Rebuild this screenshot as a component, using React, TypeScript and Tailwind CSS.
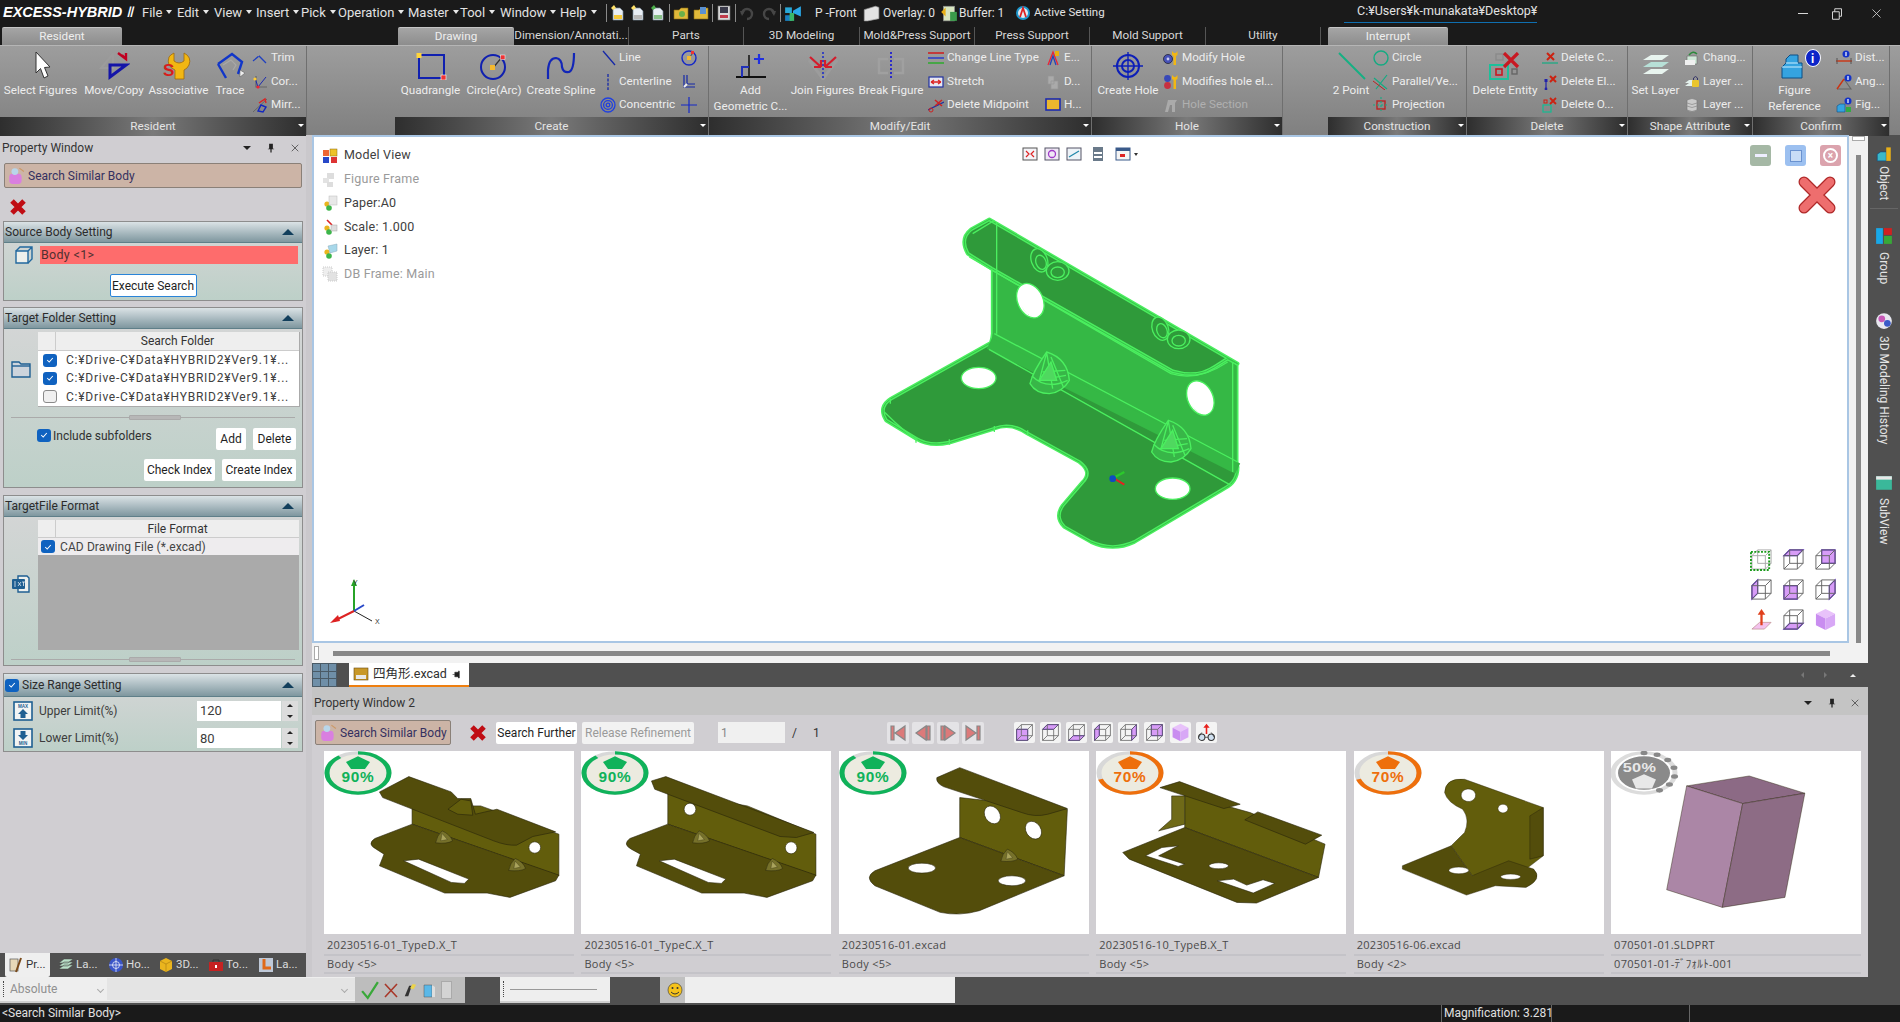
import React from "react";
import { X } from "lucide-react";

type Kids = { children?: React.ReactNode };
const S = ({ children, c = "w-[16px] h-[16px]" }: Kids & { c?: string }) => (
  <svg viewBox="0 0 16 16" className={`${c} shrink-0`}>{children}</svg>
);
const B = ({ children }: Kids) => (
  <svg viewBox="0 0 32 28" className="w-[32px] h-[28px] shrink-0">{children}</svg>
);

/* ---------- ribbon big icons ---------- */
const big = {
  select: <B><path d="M11 0 L11 21 L15.5 16.5 L19 26 L23 24 L19.5 15.5 L25 15 Z" fill="#fff" stroke="#333" strokeWidth="1" /></B>,
  move: <B><path d="M3 16 L15 2 L15 16 Z" fill="none" stroke="#9c9c9c" strokeWidth="2" /><path d="M12 25 L12 13 L28 13 Z" fill="none" stroke="#1414a8" strokeWidth="3" /><path d="M20 1 L28 7 L28 1 M28 7 L24 3" stroke="#c00020" strokeWidth="2.4" fill="none" /></B>,
  assoc: <B><path d="M11 1 L11 9 Q16 13 21 9 L21 1 Q29 5 26 13 Q24 17 21 18 L21 27 L12 27 L12 18 Q3 14 6 5 Q7 3 11 1Z" fill="#f2b713" stroke="#a06a0b" strokeWidth=".8" /><text x="0" y="24" fontSize="17" fontWeight="700" fill="#d91c1c" fontFamily="Liberation Sans">S</text></B>,
  trace: <B><path d="M4 12 L18 2 L28 10 L24 22 M12 26 L4 12" fill="none" stroke="#1136c9" strokeWidth="2.4" /><path d="M9 13 L17 8 L22 13 L19 18" fill="none" stroke="#a8a8a8" strokeWidth="1.2" /><path d="M26 18 L31 21 L26 25Z" fill="#eee" stroke="#555" strokeWidth=".5" /></B>,
  quad: <B><rect x="4" y="3" width="25" height="23" fill="none" stroke="#1020b0" strokeWidth="2" /><rect x="1.5" y="1" width="5" height="5" fill="#ffd43a" /><rect x="26" y="23" width="5" height="5" fill="#ee3333" stroke="#fff" strokeWidth=".6" /></B>,
  circle: <B><ellipse cx="15" cy="15" rx="12" ry="12" fill="none" stroke="#1020b0" strokeWidth="2" /><path d="M15 16 L24 5" stroke="#333" strokeWidth="1.2" /><rect x="12" y="13" width="5" height="5" fill="#f5b92e" /><rect x="22.5" y="3" width="4.5" height="4.5" fill="#ee3333" stroke="#fff" strokeWidth=".5" /></B>,
  spline: <B><path d="M3 27 L3 18 Q4 6 11 6 Q17 7 17 15 Q18 21 24 20 Q29 18 29 1" fill="none" stroke="#1226b8" strokeWidth="2.2" /></B>,
  add: <B><path d="M1 25 H31" stroke="#111" strokeWidth="2" /><path d="M14 25 V3" stroke="#111" strokeWidth="1.5" /><path d="M7 25 V15 H14" fill="none" stroke="#2030b8" strokeWidth="2" /><path d="M19 7 H29 M24 2 V12" stroke="#2030e0" strokeWidth="2.2" /></B>,
  join: <B><path d="M2 8 L16 27 L30 8" fill="none" stroke="#9c9c9c" strokeWidth="3" /><path d="M16 0 V28" stroke="#2030c8" strokeWidth="1.6" strokeDasharray="2 2" /><path d="M3 5 L14 15 M14 15 V8 M14 15 L7 15 M29 5 L18 15 M18 15 V8 M18 15 L25 15" stroke="#d41c2c" strokeWidth="2.2" fill="none" /></B>,
  brk: <B><path d="M13 7 H4 V21 H13 M19 7 H28 V21 H19" fill="none" stroke="#a0a0a0" strokeWidth="2.4" /><path d="M16 0 V28" stroke="#2020d0" strokeWidth="1.8" strokeDasharray="2 2" /></B>,
  hole: <B><circle cx="16" cy="14" r="11" fill="none" stroke="#0d1fb8" strokeWidth="2" /><circle cx="16" cy="14" r="6" fill="none" stroke="#0d1fb8" strokeWidth="2" /><path d="M16 0 V28 M1 14 H31" stroke="#0d1fb8" strokeWidth="1.4" /></B>,
  twoPt: <B><path d="M4 1 L30 27" stroke="#16b083" strokeWidth="2" /></B>,
  delEnt: <B><rect x="7" y="2" width="7" height="6" fill="none" stroke="#8a8a8a" strokeWidth="1.4" /><rect x="1" y="13" width="18" height="14" fill="none" stroke="#1cc09a" strokeWidth="2" /><rect x="7" y="17" width="6" height="6" fill="none" stroke="#c81822" strokeWidth="1.6" /><path d="M15 1 L29 15 M29 1 L15 15" stroke="#c81822" strokeWidth="3.2" /><rect x="23" y="17" width="5" height="5" fill="none" stroke="#666" strokeWidth="1.4" /></B>,
  layer: <B><path d="M3 8 L11 3 H29 L22 8Z" fill="#e8f4ef" /><path d="M3 15 L11 10 H29 L22 15Z" fill="#b7e0d7" /><path d="M3 22 L11 17 H29 L22 22Z" fill="#e8f4ef" /></B>,
  figRef: <B><path d="M3 26 V15 L7 11 V7 L11 3 H19 V11 L23 11 V26Z" fill="#35a3e0" stroke="#0d4e85" strokeWidth="1" /><path d="M7 11 H19 M3 15 H23" stroke="#cceeff" strokeWidth="1" /></B>,
};

/* ---------- ribbon small icons ---------- */
const sm = {
  trim: <S><path d="M1 11 L7 6 L14 13" fill="none" stroke="#2040c0" strokeWidth="1.3" /><path d="M7 6 L3 2" stroke="#999" strokeWidth="1.3" /></S>,
  cor: <S><path d="M4 2 V13 H15" fill="none" stroke="#666" strokeWidth="1.2" /><path d="M3 4 L6 13 L14 3" fill="none" stroke="#1c2bb0" strokeWidth="1" /><circle cx="6" cy="13" r="1.6" fill="#e23" /><circle cx="3" cy="5" r="1.6" fill="#fc3" /></S>,
  mirr: <S><path d="M1 15 L15 2" stroke="#666" strokeWidth="1" /><path d="M6 14 L9 8 L14 10 L11 15Z" fill="none" stroke="#1226c0" strokeWidth="1.4" /><path d="M7 6 L13 2 L14 6" fill="none" stroke="#d22" strokeWidth="1.4" /></S>,
  line: <S><path d="M3 1 L15 15" stroke="#1528a8" strokeWidth="1.3" /></S>,
  center: <S><path d="M8 0 V16" stroke="#1528a8" strokeWidth="1.3" strokeDasharray="3 1.4" /></S>,
  conc: <S><circle cx="8" cy="8" r="7" fill="none" stroke="#2040e0" strokeWidth="1.3" /><circle cx="8" cy="8" r="4.4" fill="none" stroke="#2040e0" strokeWidth="1.3" /><circle cx="8" cy="8" r="1.8" fill="none" stroke="#2040e0" strokeWidth="1.3" /></S>,
  ring: <S><circle cx="8" cy="8" r="7" fill="none" stroke="#1528c8" strokeWidth="1.4" /><path d="M8 8 L12 3" stroke="#444" /><rect x="6" y="6" width="4" height="4" fill="#f5b92e" /><rect x="10" y="1" width="3" height="3" fill="#e33" /></S>,
  elbow: <S><path d="M3 1 V13 H14 M6 1 V10 H14" fill="none" stroke="#1528a8" strokeWidth="1.2" /><path d="M3 13 L6 10" stroke="#eee" strokeWidth="2" /></S>,
  plus: <S><path d="M0 8 H16 M8 0 V16" stroke="#1528c8" strokeWidth="1.2" /></S>,
  lineType: <S><path d="M0 3 H16" stroke="#c22" strokeWidth="1.6" /><path d="M0 8 H16" stroke="#3040c8" strokeWidth="1.6" /><path d="M0 13 H16" stroke="#3a3" strokeWidth="1.6" /></S>,
  stretch: <S><rect x="1" y="3" width="14" height="10" fill="#e8e8f0" stroke="#2030a0" strokeWidth="1.2" /><path d="M3 8 H13 M3 8 L6 6 M3 8 L6 10 M13 8 L10 6 M13 8 L10 10" stroke="#d22" strokeWidth="1.3" fill="none" /></S>,
  delMid: <S><path d="M0 13 L16 5" stroke="#2030a0" strokeWidth="1.2" /><circle cx="3" cy="13" r="2" fill="none" stroke="#c22" /><path d="M7 3 L14 9 M14 3 L7 9" stroke="#c22" strokeWidth="1.6" /></S>,
  eKey: <S><path d="M3 15 L8 2 L13 15" fill="none" stroke="#e23" strokeWidth="1.3" /><path d="M5 15 L8 6 L11 15" fill="none" stroke="#24b" strokeWidth="1.3" /><path d="M10 1 V6 H14 V1" fill="#e8b010" /></S>,
  dDoc: <S><path d="M3 2 H9 V10 H3Z M6 7 H13 V15 H6Z" fill="#aaa" stroke="#999" strokeWidth=".7" /></S>,
  hatch: <S><rect x="1" y="2" width="14" height="11" fill="#eab72e" stroke="#1c2bb0" strokeWidth="1.6" /></S>,
  modHole: <S><circle cx="5" cy="9" r="4.5" fill="#4752b8" stroke="#223" strokeWidth=".8" /><circle cx="5" cy="9" r="1.4" fill="#c9ccf2" /><path d="M9 1 V5 L10.5 6 V15 H13 V6 L14.5 5 V1 L12.8 3 L11 3Z" fill="#f2b713" /></S>,
  modHole2: <S><circle cx="4.5" cy="4.5" r="3.4" fill="#3848b8" /><circle cx="4.5" cy="11.5" r="3.4" fill="#c83040" /><path d="M9 1 V5 L10.5 6 V15 H13 V6 L14.5 5 V1 L12.8 3 L11 3Z" fill="#f2b713" /></S>,
  holeSec: <S><path d="M2 15 L5 3 H14 L12 6 V15 H9 V8 H7 L5 15Z" fill="#aaa" /></S>,
  cCircle: <S><ellipse cx="8" cy="8" rx="7" ry="7" fill="none" stroke="#14ab82" strokeWidth="1.4" /></S>,
  par: <S><path d="M1 4 L14 15 M14 1 L3 15" stroke="#14ab82" strokeWidth="1.2" /><path d="M0 7 L12 16" stroke="#b22" strokeWidth="1" /></S>,
  proj: <S><rect x="4" y="4" width="8" height="8" fill="none" stroke="#b22" strokeWidth="1.4" /><path d="M8 0 V16 M0 8 H16" stroke="#14ab82" strokeWidth="1.1" strokeDasharray="2 2" /></S>,
  delC: <S><path d="M0 13 H16" stroke="#14ab82" strokeWidth="1.2" /><path d="M5 3 L12 10 M12 3 L5 10" stroke="#c21" strokeWidth="2" /></S>,
  delE: <S><path d="M4 5 V15" stroke="#22a" strokeWidth="1.2" /><circle cx="4" cy="15" r="1.4" fill="#22a" /><rect x="2.5" y="5" width="3" height="3" fill="#22a" /><path d="M8 2 L14 8 M14 2 L8 8" stroke="#c21" strokeWidth="2" /></S>,
  delO: <S><rect x="1" y="8" width="8" height="7" fill="none" stroke="#14bb92" strokeWidth="1.2" /><rect x="2" y="3" width="3" height="3" fill="none" stroke="#c21" /><path d="M8 1 L14 7 M14 1 L8 7" stroke="#c21" strokeWidth="1.8" /><rect x="11" y="10" width="3" height="3" fill="none" stroke="#888" /></S>,
  chg: <S><path d="M3 6 H13 V14 H3Z" fill="#cfe8d8" stroke="#666" strokeWidth=".6" /><path d="M1 10 H11 V15 H1Z" fill="#f0f0f0" /><path d="M5 5 Q9 0 13 4" fill="none" stroke="#2a8a3a" strokeWidth="1.5" /></S>,
  lay: <S><path d="M1 12 L5 9 H13 L9 12Z M1 9 L5 6 H13 L9 9Z" fill="#e3f0ec" /><rect x="8" y="6" width="7" height="7" rx="1" fill="#eac52c" /><path d="M9.5 6 V4 Q11.5 1 13.5 4 V6" fill="none" stroke="#336" strokeWidth="1" /></S>,
  lay2: <S><path d="M3 3 Q8 0 13 3 V13 Q8 16 3 13Z" fill="#cbcbcb" stroke="#777" strokeWidth=".6" /><path d="M3 6 Q8 9 13 6 M3 9 Q8 12 13 9" fill="none" stroke="#888" strokeWidth=".7" /></S>,
  dist: <S><path d="M0 11 H16" stroke="#c31" strokeWidth="1.4" /><path d="M1 8 V14 M15 8 V14" stroke="#555" /><circle cx="10" cy="4" r="3.5" fill="#1433c8" /><rect x="9.4" y="2" width="1.2" height="4" fill="#fff" /></S>,
  ang: <S><path d="M1 15 H15 L8 5" fill="none" stroke="#666" strokeWidth="1.2" /><path d="M1 15 L8 5" stroke="#c31" strokeWidth="1.4" /><circle cx="12" cy="4" r="3.5" fill="#1433c8" /><rect x="11.4" y="2" width="1.2" height="4" fill="#fff" /></S>,
  fig: <S><path d="M1 15 V9 L4 7 H9 V15Z" fill="#35a3e0" stroke="#0d4e85" strokeWidth=".6" /><path d="M10 10 H15 V15 H10Z" fill="#3a4" /><circle cx="12" cy="4" r="3.5" fill="#1433c8" /><rect x="11.4" y="2" width="1.2" height="4" fill="#fff" /></S>,
};

/* ---------- ribbon structure ---------- */
const Big = ({ w, ml = 0, icon, lines }: { w: number; ml?: number; icon: React.ReactNode; lines: string[] }) => (
  <div className="flex flex-col items-center shrink-0 pt-[6px]" style={{ width: w, marginLeft: ml }}>
    {icon}
    <div className="mt-[2px] text-center leading-[16px] whitespace-nowrap">
      {lines.map((l) => <div key={l}>{l}</div>)}
    </div>
  </div>
);
const Col = ({ w, ml = 0, items }: { w: number; ml?: number; items: [React.ReactNode, string, boolean?][] }) => (
  <div className="flex flex-col shrink-0" style={{ width: w, marginLeft: ml }}>
    {items.map(([ic, t, dis], i) => (
      <div key={i} className={`flex items-center gap-[3px] h-[23.7px] whitespace-nowrap ${dis ? "text-[#b0b0b0]" : ""}`}>
        {ic}<span>{t}</span>
      </div>
    ))}
  </div>
);
const Group = ({ w, pl = 4, label, children }: Kids & { w: number; pl?: number; label: string }) => (
  <div className="flex flex-col shrink-0 h-[90px] border-r border-[#6f6f6f]" style={{ width: w }}>
    <div className="flex h-[71px] overflow-hidden" style={{ paddingLeft: pl }}>{children}</div>
    <div className="relative h-[19px] flex items-center justify-center text-[#e4e4e4] bg-gradient-to-r from-[#2e2e2e] via-[#7a7a7a] to-[#2e2e2e]">
      {label}
      <span className="absolute right-[2px] top-[7px] border-x-[3px] border-t-[3px] border-x-transparent border-t-white" />
    </div>
  </div>
);

const Ribbon = () => (
  <div className="flex h-[90px] text-[11.7px] text-[#ededed] bg-gradient-to-b from-[#9d9d9d] to-[#808080] border-t border-[#b5b5b5]">
    <Group w={307} label="Resident" pl={4}>
      <Big w={73} icon={big.select} lines={["Select Figures"]} />
      <Big w={62} ml={6} icon={big.move} lines={["Move/Copy"]} />
      <Big w={59} ml={4} icon={big.assoc} lines={["Associative"]} />
      <Big w={30} ml={7} icon={big.trace} lines={["Trace"]} />
      <Col w={55} ml={7} items={[[sm.trim, "Trim"], [sm.cor, "Cor..."], [sm.mirr, "Mirr..."]]} />
    </Group>
    <div className="w-[88px] shrink-0" />
    <Group w={314} label="Create" pl={5}>
      <Big w={61} icon={big.quad} lines={["Quadrangle"]} />
      <Big w={56} ml={5} icon={big.circle} lines={["Circle(Arc)"]} />
      <Big w={70} ml={4} icon={big.spline} lines={["Create Spline"]} />
      <Col w={81} ml={4} items={[[sm.line, "Line"], [sm.center, "Centerline"], [sm.conc, "Concentric"]]} />
      <Col w={24} items={[[sm.ring, ""], [sm.elbow, ""], [sm.plus, ""]]} />
    </Group>
    <Group w={383} label="Modify/Edit" pl={5}>
      <Big w={73} icon={big.add} lines={["Add", "Geometric C..."]} />
      <Big w={61} ml={5} icon={big.join} lines={["Join Figures"]} />
      <Big w={64} ml={6} icon={big.brk} lines={["Break Figure"]} />
      <Col w={117} ml={5} items={[[sm.lineType, "Change Line Type"], [sm.stretch, "Stretch"], [sm.delMid, "Delete Midpoint"]]} />
      <Col w={40} items={[[sm.eKey, "E..."], [sm.dDoc, "D..."], [sm.hatch, "H..."]]} />
    </Group>
    <Group w={191} label="Hole" pl={4}>
      <Big w={64} icon={big.hole} lines={["Create Hole"]} />
      <Col w={118} ml={3} items={[[sm.modHole, "Modify Hole"], [sm.modHole2, "Modifies hole el..."], [sm.holeSec, "Hole Section", true]]} />
    </Group>
    <div className="w-[45px] shrink-0" />
    <Group w={139} label="Construction" pl={5}>
      <Big w={36} icon={big.twoPt} lines={["2 Point"]} />
      <Col w={90} ml={4} items={[[sm.cCircle, "Circle"], [sm.par, "Parallel/Ve..."], [sm.proj, "Projection"]]} />
    </Group>
    <Group w={161} label="Delete" pl={4}>
      <Big w={68} icon={big.delEnt} lines={["Delete Entity"]} />
      <Col w={84} ml={3} items={[[sm.delC, "Delete C..."], [sm.delE, "Delete El..."], [sm.delO, "Delete O..."]]} />
    </Group>
    <Group w={125} label="Shape Attribute" pl={4}>
      <Big w={47} icon={big.layer} lines={["Set Layer"]} />
      <Col w={62} ml={5} items={[[sm.chg, "Chang..."], [sm.lay, "Layer ..."], [sm.lay2, "Layer ..."]]} />
    </Group>
    <Group w={137} label="Confirm" pl={15}>
      <Big w={53} icon={
        <div className="relative w-[32px] h-[28px]">
          {big.figRef}
          <span className="absolute -top-[3px] -right-[10px] w-[16px] h-[18px] rounded-[50%] bg-[#0d24c8] text-white text-[12px] font-bold leading-[18px] text-center border border-white">i</span>
        </div>
      } lines={["Figure", "Reference"]} />
      <Col w={52} ml={15} items={[[sm.dist, "Dist..."], [sm.ang, "Ang..."], [sm.fig, "Fig..."]]} />
    </Group>
  </div>
);

/* ---------- title bar ---------- */
const Caret = () => <span className="inline-block ml-[4px] mb-[3px] border-x-[3.5px] border-t-[4px] border-x-transparent border-t-[#e8e8e8]" />;
const Sep = () => <span className="w-px h-[18px] bg-[#8a8a8a] mx-[3px] shrink-0" />;
const Doc = ({ tint = "#f3c93b", star = "#ffe26a" }: { tint?: string; star?: string }) => (
  <S><path d="M3 3 H10 L13 6 V15 H3Z" fill="#e8eef5" stroke="#7a8a9a" strokeWidth=".7" /><rect x="4" y="10" width="8" height="4" fill={tint} /><path d="M4 0 L6 3 L3 5 L1 3Z" fill={star} /></S>
);
const TitleBar = () => (
  <div className="flex items-center h-[27px] pb-[2px] bg-[#1a1a1a] text-[13px] text-[#e2e2e2] relative">
    <div className="ml-[3px] w-[139px] shrink-0 whitespace-nowrap text-[14.5px] italic font-bold text-white font-['Liberation_Sans',sans-serif]">EXCESS-HYBRID<span className="font-['Liberation_Serif',serif] font-normal"> Ⅱ</span></div>
    <div className="flex w-[461px] shrink-0">
      {[["File", 35], ["Edit", 37], ["View", 42], ["Insert", 45], ["Pick", 37], ["Operation", 70], ["Master", 52], ["Tool", 40], ["Window", 60], ["Help", 41]].map(([m, w]) => (
        <div key={m as string} className="whitespace-nowrap" style={{ width: w as number }}>{m}<Caret /></div>
      ))}
    </div>
    <Sep />
    <div className="flex items-center gap-[4px]">
      <Doc /><Doc tint="#b9b9b9" /><Doc tint="#88c088" star="#4cb04c" />
    </div>
    <Sep />
    <div className="flex items-center gap-[4px]">
      <S><path d="M1 5 H6 L8 3 H15 V14 H1Z" fill="#e0b93a" stroke="#8a6a10" strokeWidth=".6" /><circle cx="9" cy="9" r="3" fill="#6ab04a" /></S>
      <S><path d="M1 5 H6 L8 3 H15 V14 H1Z" fill="#e0b93a" stroke="#8a6a10" strokeWidth=".6" /><rect x="7" y="2" width="6" height="7" fill="#5a90d0" /></S>
    </div>
    <Sep />
    <S><rect x="2" y="1" width="12" height="14" fill="#d8d8d8" stroke="#777" strokeWidth=".6" /><rect x="4" y="2" width="8" height="6" fill="#3a3a4a" /><rect x="4" y="10" width="8" height="3" fill="#c03a4a" /></S>
    <Sep />
    <div className="flex items-center gap-[6px] opacity-40">
      <S><path d="M3 9 A5 5 0 1 1 8 14" fill="none" stroke="#888" strokeWidth="2.4" /><path d="M1 6 L6 6 L3 11Z" fill="#888" /></S>
      <S><path d="M13 9 A5 5 0 1 0 8 14" fill="none" stroke="#888" strokeWidth="2.4" /><path d="M15 6 L10 6 L13 11Z" fill="#888" /></S>
    </div>
    <Sep />
    <S c="w-[18px] h-[18px]"><rect x="1" y="3" width="6" height="5" fill="#28a8d8" /><rect x="1" y="10" width="6" height="5" fill="#1880c0" /><path d="M8 6 L15 2 V11 L8 8Z" fill="#2aa8e8" /><rect x="5" y="8" width="4" height="7" fill="#3ab86a" /></S>
    <span className="ml-[13px] w-[40px] whitespace-nowrap text-[12px]">P -Front</span>
    <S c="w-[18px] h-[18px] ml-[7px]"><path d="M2 5 L12 2 L15 3 V13 L5 15 H2Z" fill="#e2e2e2" stroke="#999" strokeWidth=".6" /></S>
    <span className="ml-[3px] w-[52px] whitespace-nowrap text-[12px]">Overlay: 0</span>
    <S c="w-[18px] h-[18px] ml-[5px]"><rect x="3" y="2" width="10" height="13" fill="#d8e6c0" stroke="#888" strokeWidth=".6" /><path d="M1 7 L5 3 V11Z" fill="#e8b018" /><rect x="9" y="7" width="6" height="8" fill="#3a9a4a" /></S>
    <span className="ml-[1px] w-[45px] whitespace-nowrap text-[12px]">Buffer: 1</span>
    <S c="w-[16px] h-[16px] ml-[11px]"><circle cx="8" cy="8" r="7" fill="#1c96cc" /><circle cx="8" cy="8" r="5" fill="#e0e8f0" /><path d="M5 12 L8 3 L11 12" fill="none" stroke="#d22" strokeWidth="1.8" /></S>
    <span className="ml-[3px] whitespace-nowrap text-[11.5px]">Active Setting</span>
    <div className="absolute left-[1344px] top-[1px] w-[193px] h-[22px] border-b border-[#0f6fb0] pl-[13px] leading-[20px] whitespace-nowrap text-[12.5px]">C:¥Users¥k-munakata¥Desktop¥</div>
    <div className="absolute right-0 top-0 h-[27px] w-[110px] flex items-center text-[#d8d8d8]">
      <span className="ml-[8px] w-[10px] h-px bg-[#d8d8d8]" />
      <S c="w-[12px] h-[12px] ml-[23px]"><path d="M2 5 H11 V15 H2Z M5 5 V1 H14 V11 H11" fill="none" stroke="#d8d8d8" strokeWidth="1.3" /></S>
      <X size={15} strokeWidth={1.3} className="ml-[26px]" />
    </div>
  </div>
);

const TabsRow = () => {
  const tabs: [string, number][] = [["Dimension/Annotati...", 115], ["Parts", 115], ["3D Modeling", 116], ["Mold&Press Support", 115], ["Press Support", 115], ["Mold Support", 116], ["Utility", 115]];
  const Active = ({ t, w, ml }: { t: string; w: number; ml: number }) => (
    <div className="flex items-center justify-center h-[18px] rounded-t-[2px] text-[#eee] bg-gradient-to-b from-[#a5a5a5] to-[#8d8d8d] border-t border-[#c5c5c5] shrink-0" style={{ width: w, marginLeft: ml }}>{t}</div>
  );
  return (
    <div className="flex h-[18px] bg-[#1a1a1a] text-[11.7px] text-[#d8d8d8]">
      <Active t="Resident" w={120} ml={2} />
      <Active t="Drawing" w={116} ml={276} />
      {tabs.map(([t, w]) => (
        <div key={t} className="flex items-center justify-center h-[18px] border-r border-[#555] whitespace-nowrap shrink-0" style={{ width: w }}>{t}</div>
      ))}
      <Active t="Interrupt" w={120} ml={7} />
    </div>
  );
};

/* ---------- left panel ---------- */
const Tri = () => <span className="ml-auto mr-[7px] border-x-[6px] border-b-[6px] border-x-transparent border-b-[#123f5c]" />;
const Check = ({ on = true }: { on?: boolean }) => on ? (
  <span className="flex items-center justify-center w-[14px] h-[13px] rounded-[3px] bg-[#0f62c0] shrink-0">
    <svg viewBox="0 0 10 10" className="w-[8px] h-[8px]"><path d="M1.5 5 L4 7.5 L8.5 2.5" fill="none" stroke="#fff" strokeWidth="1.3" /></svg>
  </span>
) : <span className="block w-[14px] h-[13px] rounded-[3px] bg-[#f0f0f0] border border-[#8a8a8a] shrink-0" />;
const Head = ({ children }: Kids) => (
  <div className="flex items-center h-[21px] px-[1px] bg-gradient-to-b from-[#dbe3e6] to-[#7f979f] border-b border-[#5f7f89] text-[#2b2b2b] text-[12px]">
    {children}<Tri />
  </div>
);
const Sec = ({ h, mt, children }: Kids & { h: number; mt: number }) => (
  <div className="mx-[3px] border border-[#8d8d8d] bg-gradient-to-b from-[#d6d6d7] to-[#bdd0c8] shrink-0" style={{ height: h, marginTop: mt }}>{children}</div>
);
const Btn = ({ children, c }: Kids & { c: string }) => (
  <div className={`flex items-center justify-center bg-white rounded-[2px] text-[#1f1f1f] whitespace-nowrap ${c}`}>{children}</div>
);
const Grip = () => (
  <div className="relative h-px bg-[#aaa] mx-[7px]">
    <span className="absolute left-[118px] -top-[2px] w-[52px] h-[5px] bg-[#b7b7b7] border border-[#aaa] rounded-[1px]" />
  </div>
);
const PathRow = ({ on }: { on: boolean }) => (
  <div className="flex items-center h-[18.3px] bg-white">
    <span className="block w-[23px] pl-[5px]"><Check on={on} /></span>
    <span className="ml-[5px] text-[#404040] tracking-[0.75px] whitespace-nowrap">C:¥Drive-C¥Data¥HYBRID2¥Ver9.1¥...</span>
  </div>
);
const SqIcon = ({ d }: { d: React.ReactNode }) => (
  <svg viewBox="0 0 20 20" className="w-[20px] h-[20px] shrink-0">{d}</svg>
);
const LeftPanel = () => (
  <div className="flex flex-col w-[306px] shrink-0 h-full text-[12px] text-[#303030] font-['Roboto',sans-serif]">
    <div className="flex items-center h-[25px] pl-[2px] text-[12px] text-[#333] shrink-0">
      Property Window
      <span className="ml-auto border-x-[4px] border-t-[4px] border-x-transparent border-t-[#222]" />
      <S c="w-[10px] h-[10px] ml-[15px]"><path d="M5 1 H11 V9 H13 V10 H9 V15 H7 V10 H3 V9 H5Z" fill="#222" /></S>
      <X size={12} strokeWidth={1.4} className="ml-[13px] mr-[5px] text-[#333]" />
    </div>
    <div className="flex items-center h-[25px] mt-[3px] mx-[4px] bg-[#ccb4a6] border border-[#8a8078] rounded-[2px] pl-[2px] gap-[3px] text-[#343060] text-[12px] shrink-0">
      <S c="w-[18px] h-[18px]"><rect x="2" y="6" width="11" height="9" rx="3" fill="#d97fe0" /><circle cx="7" cy="4" r="3" fill="#b9d6ea" /><path d="M11 1 L15 4" stroke="#c96" strokeWidth="1" /></S>
      Search Similar Body
    </div>
    <div className="h-[33px] pl-[9px] pt-[10px] shrink-0">
      <svg viewBox="0 0 18 18" className="w-[18px] h-[18px]"><path d="M3 3 L15 15 M15 3 L3 15" stroke="#c00d14" strokeWidth="5" /></svg>
    </div>
    <Sec h={80} mt={0}>
      <Head>Source Body Setting</Head>
      <div className="flex items-center h-[24px] pl-[10px]">
        <svg viewBox="0 0 20 20" className="w-[20px] h-[20px] shrink-0"><path d="M2 6 H14 V18 H2Z" fill="#eef0ec" stroke="#22689e" strokeWidth="1.4" /><path d="M2 6 L6 2 H18 V14 L14 18 M14 6 L18 2" fill="none" stroke="#22689e" strokeWidth="1.4" /></svg>
        <div className="flex items-center ml-[6px] w-[258px] h-[18px] bg-[#fe6c6c] pl-[1px] text-[#503030] text-[12.5px] tracking-[0.3px]">Body &lt;1&gt;</div>
      </div>
      <div className="flex justify-center mt-[7px]">
        <Btn c="w-[87px] h-[23px] border border-[#2a84d8] text-[12px]">Execute Search</Btn>
      </div>
    </Sec>
    <Sec h={181} mt={6}>
      <Head>Target Folder Setting</Head>
      <div className="flex mt-[3px]">
        <div className="w-[34px] flex items-center justify-center">
          <svg viewBox="0 0 20 20" className="w-[20px] h-[20px]"><path d="M1 3 H8 L10 5 H19 V18 H1Z" fill="#cdd4dc" stroke="#1f5f92" strokeWidth="1.4" /><path d="M1 7 H19" stroke="#1f5f92" strokeWidth="1.4" /></svg>
        </div>
        <div className="w-[262px] border-b border-r border-[#aaa] bg-white text-[12px]">
          <div className="flex h-[19px] bg-[#eeeeee] border-b border-[#ccc]">
            <span className="block w-[18px] border-r border-[#ccc]" />
            <span className="flex-1 text-center text-[#333]">Search Folder</span>
          </div>
          <PathRow on /><PathRow on /><PathRow on={false} />
        </div>
      </div>
      <div className="mt-[10px]"><Grip /></div>
      <div className="flex mt-[11px] pl-[33px] pr-[6px]">
        <Check />
        <span className="ml-[2px] mt-[-2px] text-[12px]">Include subfolders</span>
        <Btn c="ml-auto w-[30px] h-[22px] mt-[-1px]">Add</Btn>
        <Btn c="ml-[7px] w-[43px] h-[22px] mt-[-1px]">Delete</Btn>
      </div>
      <div className="flex justify-end gap-[7px] mt-[9px] pr-[6px]">
        <Btn c="w-[71px] h-[22px]">Check Index</Btn>
        <Btn c="w-[74px] h-[22px]">Create Index</Btn>
      </div>
    </Sec>
    <Sec h={171} mt={7}>
      <Head>TargetFile Format</Head>
      <div className="flex mt-[3px]">
        <div className="w-[34px] flex items-center justify-center pb-[2px]">
          <svg viewBox="0 0 20 20" className="w-[20px] h-[20px]"><path d="M7 2 H16 L18 4 V18 H7Z" fill="#eef0ee" stroke="#1f5f92" strokeWidth="1.4" /><rect x="1" y="5" width="13" height="10" rx="1" fill="#1f5f92" /><path d="M3 8 H5 M3 10 H5 M3 12 H5 M7 8 L10 12 M10 8 L7 12 M11 8 H14 M12.5 8 V12" stroke="#fff" strokeWidth=".7" /></svg>
        </div>
        <div className="w-[261px] h-[130px] flex flex-col">
          <div className="flex h-[18px] bg-[#eeeeee] border-b border-[#ccc] shrink-0">
            <span className="block w-[18px] border-r border-[#ccc]" />
            <span className="flex-1 text-center text-[#333]">File Format</span>
          </div>
          <div className="flex items-center h-[17px] bg-[#eeecee] shrink-0 pl-[3px]">
            <Check />
            <span className="ml-[5px] tracking-[0.1px] text-[#444]">CAD Drawing File (*.excad)</span>
          </div>
          <div className="flex-1 bg-[#aaaaaa]" />
        </div>
      </div>
      <div className="mt-[9px]"><Grip /></div>
    </Sec>
    <Sec h={79} mt={7}>
      <div className="flex items-center h-[23px] px-[1px] bg-gradient-to-b from-[#dbe3e6] to-[#7f979f] border-b border-[#5f7f89] text-[#2b2b2b] text-[12px]">
        <Check /><span className="ml-[3px]">Size Range Setting</span><Tri />
      </div>
      {[["Upper Limit(%)", "120", "MAX"], ["Lower Limit(%)", "80", "MIN"]].map(([l, v, k]) => (
        <div key={k} className="flex items-center h-[27.5px] pl-[9px] text-[12px] text-[#3c3c3c]">
          <SqIcon d={<g><rect x="1" y="1" width="18" height="18" fill="#f2f4f4" stroke="#1f5f92" strokeWidth="1.6" /><text x="10" y={k === "MAX" ? 7 : 17} fontSize="4.6" fontWeight="700" textAnchor="middle" fill="#1f5f92" fontFamily="Liberation Sans">{k}</text><path d={k === "MAX" ? "M10 8 L15 13 H12.5 V17 H7.5 V13 H5Z" : "M10 12 L15 7 H12.5 V3 H7.5 V7 H5Z"} fill="#1f5f92" /></g>} />
          <span className="ml-[6px]">{l}</span>
          <div className="flex items-center ml-auto mr-[1px] w-[84px] h-[20px] bg-white pl-[3px] text-[13px]">{v}</div>
          <div className="flex flex-col justify-between w-[16px] h-[20px] mr-[4px] bg-[#dcdcdc] py-[3px] items-center">
            <span className="border-x-[3px] border-b-[3px] border-x-transparent border-b-[#222]" />
            <span className="border-x-[3px] border-t-[3px] border-x-transparent border-t-[#222]" />
          </div>
        </div>
      ))}
    </Sec>
    <div className="flex-1" />
    <div className="flex h-[24px] bg-[#505050] pl-[5px] text-[11.5px] text-[#ddd] shrink-0">
      {([
        ["Pr...", <S key="a"><rect x="2" y="2" width="8" height="12" fill="#e8d9b8" stroke="#555" strokeWidth=".7" /><path d="M13 1 L8 15" stroke="#7a4a1a" strokeWidth="2" /></S>],
        ["La...", <S key="b"><path d="M1 6 L6 2 H15 L10 6Z M1 9 L6 5 H15 L10 9Z M1 12 L6 8 H15 L10 12Z" fill="#b9e0c8" stroke="#444" strokeWidth=".5" /></S>],
        ["Ho...", <S key="c"><circle cx="8" cy="8" r="7" fill="#3a55c8" /><path d="M8 1 V15 M1 8 H15" stroke="#fff" strokeWidth=".7" /><circle cx="8" cy="8" r="3.5" fill="none" stroke="#fff" strokeWidth=".7" /></S>],
        ["3D...", <S key="d"><path d="M8 1 L14 4 V12 L8 15 L2 12 V4Z" fill="#eab51e" /><path d="M2 4 L8 7 L14 4 M8 7 V15" stroke="#a87a10" strokeWidth=".6" fill="none" /></S>],
        ["To...", <S key="e"><rect x="1" y="5" width="14" height="9" fill="#c52222" /><path d="M5 5 V3 H11 V5" stroke="#333" fill="none" /><rect x="7" y="8" width="2" height="3" fill="#fff" /></S>],
        ["La...", <S key="f"><rect x="1" y="1" width="14" height="14" fill="#bfc9d8" /><path d="M6 2 V11 H13" stroke="#e06a1a" strokeWidth="3" fill="none" /></S>],
      ] as [string, React.ReactNode][]).map(([t, ic], i) => (
        <div key={i} className={`flex items-center gap-[2px] w-[45px] mr-[5px] pl-[3px] ${i === 0 ? "bg-[#efefef] text-[#333] rounded-b-[2px]" : ""}`}>{ic}{t}</div>
      ))}
    </div>
  </div>
);

/* ---------- canvas ---------- */
const MODEL_FLOOR = "M385 425 L90 590 Q50 615 75 655 L165 710 Q205 735 265 722 L400 680 Q450 660 500 695 L655 780 Q695 810 665 840 L605 910 Q580 945 610 975 L690 1020 Q755 1050 820 1020 L1090 860 Q1130 840 1130 795 Z";
const MODEL_WALL = "M392 200 L392 395 Q390 415 385 425 L1130 800 L1130 490 L1100 470 Q1010 535 935 505 Z";
const MODEL_FLANGE = "M385 52 L330 82 Q295 110 320 155 L392 200 L935 508 Q1010 530 1060 495 L1100 470 L1130 485 Z";
const G1 = "#4bef5f";
const Dbl = ({ d, fill }: { d: string; fill: string }) => (
  <g>
    <path d={d} fill={fill} stroke={G1} strokeWidth="11" strokeLinejoin="round" />
    <path d={d} fill="none" stroke="#38c24a" strokeWidth="3" strokeLinejoin="round" />
  </g>
);
const Bump = ({ x, y }: { x: number; y: number }) => (
  <g transform={`translate(${x} ${y})`} fill="none" stroke={G1} strokeWidth="4">
    <path d="M-58 35 Q-50 0 -8 -60 Q55 -40 60 25 Q40 60 0 65 Q-40 65 -58 35Z" fill="#38b648" />
    <path d="M-52 12 Q-10 55 55 25 M-8 -58 L-30 25 M-8 -58 L10 50 M5 -45 L42 45 M-20 0 L48 -5 M-35 25 L50 10" />
    <path d="M-30 25 L5 -30 L22 25Z" fill="#4fd85f" />
  </g>
);
const Tab2 = ({ x, y }: { x: number; y: number }) => (
  <g transform={`translate(${x} ${y})`} fill="#2f9a3a" stroke={G1} strokeWidth="4">
    <ellipse cx="-30" cy="-10" rx="24" ry="36" transform="rotate(-20 -30 -10)" />
    <ellipse cx="-25" cy="-4" rx="15" ry="22" transform="rotate(-20 -25 -4)" />
    <ellipse cx="25" cy="22" rx="34" ry="28" />
    <ellipse cx="25" cy="26" rx="20" ry="16" />
  </g>
);
const Model = () => (
  <svg viewBox="0 0 1200 1080" className="absolute left-[547px] top-[65px] w-[400px] h-[360px]">
    <path d={MODEL_WALL} fill="#35b845" stroke={G1} strokeWidth="5" />
    <Dbl d={MODEL_FLANGE} fill="#2f9a3a" />
    <Dbl d={MODEL_FLOOR} fill="#2f9a3a" />
    <path d="M385 425 L1130 800" stroke="#35b845" strokeWidth="34" />
    <g fill="none" stroke={G1} strokeWidth="4">
      <path d="M325 165 L930 515 Q1010 540 1100 480 M407 62 V395 M400 395 L1130 780 M384 442 L1110 850 M70 630 Q130 690 170 715 M335 95 L400 55" />
      <path d="M392 200 V395 M1115 480 V810 M88 590 V605 M165 705 V722 M265 712 V728 M400 672 V690 M500 685 V700" />
    </g>
    <g stroke={G1} strokeWidth="4" fill="#fff">
      <ellipse cx="508" cy="296" rx="38" ry="54" transform="rotate(-25 508 296)" />
      <ellipse cx="1018" cy="588" rx="38" ry="54" transform="rotate(-25 1018 588)" />
      <ellipse cx="353" cy="528" rx="52" ry="32" />
      <ellipse cx="935" cy="860" rx="52" ry="32" />
    </g>
    <g fill="#2f9a3a" stroke="none">
      <path d="M480 310 A38 54 -25 0 0 525 345 A40 58 -25 0 1 480 310Z" fill="#4bef5f" />
      <path d="M990 605 A38 54 -25 0 0 1035 640 A40 58 -25 0 1 990 605Z" fill="#4bef5f" />
    </g>
    <Tab2 x={565} y={185} />
    <Tab2 x={928} y={390} />
    <Bump x={565} y={510} />
    <Bump x={930} y={715} />
    <path d="M757 828 L790 810" stroke="#2bc92b" strokeWidth="7" />
    <path d="M757 828 L790 848" stroke="#e82020" strokeWidth="6" />
    <circle cx="755" cy="830" r="10" fill="#0f4cc0" />
  </svg>
);
const faces: Record<string, string> = {
  front: "M2 8H16V22H2Z", top: "M2 8L8 2H22L16 8Z", back: "M8 2H22V16H8Z",
  bottom: "M2 22L8 16H22L16 22Z", left: "M2 8L8 2V16L2 22Z", right: "M16 8L22 2V16L16 22Z",
};
const Cube = ({ f, c = "w-[23px] h-[23px]" }: { f: string; c?: string }) => (
  <svg viewBox="0 0 24 24" className={c}>
    <path d={faces[f]} fill="#d79cf6" stroke="#5a20d0" strokeWidth="1.2" />
    <path d="M2 8H16V22H2Z M8 2H22V16H8Z M2 8L8 2 M16 8L22 2 M16 22L22 16 M2 22L8 16" fill="none" stroke="#666" strokeWidth="1" />
  </svg>
);
const Iso = ({ c = "w-[23px] h-[23px]" }: { c?: string }) => (
  <svg viewBox="0 0 24 24" className={c}>
    <path d="M12 1 L22 6 L12 11 L2 6Z" fill="#e8c2fa" /><path d="M2 6 L12 11 V23 L2 18Z" fill="#c98df0" /><path d="M22 6 L12 11 V23 L22 18Z" fill="#d8a8f6" />
  </svg>
);
const Glasses = ({ c = "w-[23px] h-[23px]" }: { c?: string }) => (
  <svg viewBox="0 0 24 24" className={c}>
    <path d="M12 1 L16 6 H13 V14 H11 V6 H8Z" fill="#e8201c" />
    <circle cx="6" cy="18" r="4" fill="#d0e0f0" stroke="#333" strokeWidth="1.3" /><circle cx="18" cy="18" r="4" fill="#d0e0f0" stroke="#333" strokeWidth="1.3" /><path d="M10 18 H14 M2 18 L6 12 M22 18 L18 12" stroke="#333" />
  </svg>
);
const InfoRow = ({ t, dis, ic }: { t: string; dis?: boolean; ic: React.ReactNode }) => (
  <div className={`flex items-center h-[23.7px] gap-[6px] ${dis ? "text-[#9a9a9a]" : "text-[#404040]"}`}>{ic}{t}</div>
);
const Dots = ({ children }: Kids) => (
  <S><circle cx="5" cy="9" r="2.6" fill="#eab51e" /><circle cx="7" cy="13" r="2.8" fill="#3cb54a" />{children}</S>
);
const WinBtn = ({ bg, children }: Kids & { bg: string }) => (
  <div className={`flex items-center justify-center w-[21px] h-[21px] rounded-[3px] ${bg}`}>{children}</div>
);
const Canvas = () => (
  <div className="relative flex-1 bg-white border-2 border-[#a9c6e4] overflow-hidden">
    <div className="absolute left-[8px] top-[7px] text-[12.5px] tracking-[0.2px]">
      <InfoRow t="Model View" ic={<S><rect x="1" y="2" width="6" height="6" fill="#e63" /><rect x="8" y="1" width="7" height="7" fill="#edc22a" stroke="#8a6a10" strokeWidth=".5" /><rect x="1" y="9" width="6" height="6" fill="#2848c8" /><rect x="9" y="9" width="6" height="6" fill="#d33" /></S>} />
      <InfoRow dis t="Figure Frame" ic={<S><rect x="5" y="1" width="7" height="6" fill="#ddd" /><rect x="1" y="6" width="6" height="5" fill="#e2e2e2" /><rect x="5" y="10" width="6" height="5" fill="#ddd" /></S>} />
      <InfoRow t="Paper:A0" ic={<Dots><rect x="7" y="1" width="8" height="9" fill="#e8e8e8" stroke="#bbb" strokeWidth=".5" /></Dots>} />
      <InfoRow t="Scale: 1.000" ic={<Dots><path d="M5 1 L10 6" stroke="#d22" strokeWidth="1.6" /><rect x="9" y="6" width="6" height="6" fill="#ddd" stroke="#aaa" strokeWidth=".5" /></Dots>} />
      <InfoRow t="Layer: 1" ic={<Dots><path d="M6 3 L15 1 V8 L8 10Z" fill="#a8d8ea" stroke="#8ab" strokeWidth=".5" /></Dots>} />
      <InfoRow dis t="DB Frame: Main" ic={<S><rect x="1" y="1" width="9" height="9" fill="#eee" stroke="#ccc" strokeDasharray="1 1" /><rect x="6" y="6" width="9" height="9" fill="#e2e2e2" stroke="#ccc" strokeDasharray="1 1" /></S>} />
    </div>
    <div className="absolute left-[708px] top-[9px] flex items-center gap-[6px]">
      <S><rect x="1" y="2" width="14" height="12" fill="#f4f4f8" stroke="#555" /><path d="M4 5 L7 8 L4 11 M12 5 L9 8 L12 11" stroke="#d22" strokeWidth="1.2" fill="none" /></S>
      <S><rect x="1" y="2" width="14" height="12" fill="#f0e8f6" stroke="#556" /><circle cx="8" cy="8" r="3.5" fill="none" stroke="#a03ac8" strokeWidth="1.3" /></S>
      <S><rect x="1" y="2" width="14" height="12" fill="#eef3f8" stroke="#556" /><path d="M3 11 L13 5" stroke="#28a" strokeWidth="1.3" /></S>
      <S c="w-[16px] h-[16px] ml-[2px]"><rect x="3" y="1" width="10" height="14" fill="#6a7a8a" /><rect x="4" y="6" width="8" height="2" fill="#fff" /><rect x="4" y="10" width="8" height="2" fill="#fff" /></S>
      <S c="w-[16px] h-[16px] ml-[3px]"><rect x="1" y="2" width="14" height="12" fill="#f4f4f4" stroke="#3a5a8a" /><rect x="1" y="2" width="14" height="3" fill="#3a5a8a" /><rect x="5" y="8" width="5" height="3" fill="#d22" /></S>
      <span className="border-x-[2px] border-t-[3px] border-x-transparent border-t-[#333] -ml-[3px]" />
    </div>
    <div className="absolute right-[6px] top-[8px] flex gap-[14px]">
      <WinBtn bg="bg-[#a5b8a5]"><span className="w-[12px] h-[3px] bg-[#eef]" /></WinBtn>
      <WinBtn bg="bg-[#9cc0f0]"><span className="w-[12px] h-[12px] bg-[#c8dcf6] border border-[#6a92d0]" /></WinBtn>
      <WinBtn bg="bg-[#dba3ad]"><span className="flex items-center justify-center w-[15px] h-[15px] rounded-full border-[2px] border-white text-white text-[10px] font-bold leading-none">×</span></WinBtn>
    </div>
    <svg viewBox="0 0 40 38" className="absolute right-[10px] top-[39px] w-[40px] h-[38px]">
      <path d="M7 6 L33 32 M33 6 L7 32" stroke="#b02a2a" strokeWidth="11" strokeLinecap="round" />
      <path d="M7 6 L33 32 M33 6 L7 32" stroke="#ee6e6e" strokeWidth="8.5" strokeLinecap="round" />
    </svg>
    <Model />
    <svg viewBox="0 0 56 48" className="absolute left-[12px] top-[440px] w-[56px] h-[48px]">
      <path d="M28 34 L28 6" stroke="#27a327" strokeWidth="2" /><path d="M28 2 L31 9 H25Z" fill="#27a327" />
      <path d="M28 34 L46 44" stroke="#222" strokeWidth="1" /><path d="M28 34 L8 44" stroke="#d22" strokeWidth="2" /><path d="M4 46 L12 38 L14 44Z" fill="#d22" />
      <path d="M28 34 L38 28" stroke="#2848c8" strokeWidth="2" />
      <text x="27" y="8" fontSize="7" fill="#333" fontFamily="Liberation Sans">Y</text>
      <text x="49" y="47" fontSize="7" fill="#333" fontFamily="Liberation Sans">X</text>
    </svg>
    <div className="absolute right-[10px] top-[411px] grid grid-cols-3 gap-x-[9px] gap-y-[7px]">
      <svg viewBox="0 0 24 24" className="w-[23px] h-[23px]"><path d="M2 8H16V22H2Z M8 2H22V16H8Z M2 8L8 2 M16 8L22 2 M16 22L22 16" fill="none" stroke="#aaa" /><rect x="1" y="4" width="19" height="19" fill="none" stroke="#1a9a1a" strokeWidth="2" strokeDasharray="2 1.5" /></svg>
      <Cube f="top" /><Cube f="back" /><Cube f="left" /><Cube f="front" /><Cube f="right" />
      <svg viewBox="0 0 24 24" className="w-[23px] h-[23px]"><path d="M2 22 L10 15 H22 L15 22Z" fill="#f3c2ee" stroke="#b88" strokeWidth=".7" /><path d="M12 18 V5" stroke="#e0401c" strokeWidth="2.4" /><path d="M12 1 L16 7 H8Z" fill="#e0401c" /></svg>
      <Cube f="bottom" /><Iso />
    </div>
  </div>
);

/* ---------- thumbnails ---------- */
const Olive = ({ vb, children }: Kids & { vb: string }) => (
  <svg viewBox={vb} preserveAspectRatio="none" className="absolute inset-0 w-full h-full">
    <g stroke="#27240a" strokeWidth="1.2">{children}</g>
  </svg>
);
const D = "#534d0b", L = "#625d0c";
const OBump = ({ x, y }: { x: number; y: number }) => (
  <g transform={`translate(${x} ${y})`}><path d="M-12 16 Q-10 -6 -2 -20 Q10 -10 14 10 Q6 20 -12 16Z" fill="#76712a" stroke="#27240a" strokeWidth="1" /><path d="M-2 -12 L-4 10 L6 6Z" fill="#a9a35c" stroke="#27240a" strokeWidth=".6" /></g>
);
const Hole = ({ x, y, rx, ry, r = 0 }: { x: number; y: number; rx: number; ry: number; r?: number }) => (
  <ellipse cx={x} cy={y} rx={rx} ry={ry} transform={`rotate(${r} ${x} ${y})`} fill="#fff" stroke="#27240a" strokeWidth="1.2" />
);
const thumbs = [
  <Olive key="1" vb="0 5 383 550">
    <path d="M135 170 V225 L360 380 L360 255 L240 170Z" fill={L} />
    <path d="M135 225 L78 268 Q65 285 80 300 L92 315 L85 350 L185 432 L250 432 L285 445 L355 395 L360 378Z" fill={D} />
    <path d="M85 128 L130 82 L195 128 L205 148 L225 148 L232 195 L265 180 L355 248 L320 262 L295 288 Q280 290 260 275 L90 145Z" fill={D} />
    <path d="M190 180 L210 150 L225 155 L228 198 L205 195Z" fill={L} />
    <Hole x={323} y={295} rx={9} ry={17} /><path d="M122 335 L145 330 L222 390 L215 403 L195 400Z" fill="#fff" />
    <OBump x={183} y={265} /><OBump x={295} y={348} />
  </Olive>,
  <Olive key="2" vb="395 5 383 550">
    <path d="M528 130 V225 L755 380 L755 255 L650 170Z" fill={L} />
    <path d="M528 225 L470 268 Q458 285 472 300 L486 315 L480 350 L580 432 L645 432 L680 445 L750 395 L755 378Z" fill={D} />
    <path d="M503 95 L525 82 L752 250 L725 265 L700 262 L508 120Z" fill={D} />
    <Hole x={562} y={180} rx={9} ry={18} /><Hole x={717} y={296} rx={9} ry={18} />
    <path d="M515 335 L538 330 L617 390 L610 403 L590 400Z" fill="#fff" />
    <OBump x={578} y={265} /><OBump x={690} y={348} />
  </Olive>,
  <Olive key="3" vb="790 5 383 550">
    <path d="M975 145 V265 L1135 380 L1140 180Z" fill={L} />
    <path d="M975 265 L845 365 Q828 385 845 410 L945 490 Q975 502 1005 485 L1135 380Z" fill={D} />
    <path d="M940 85 L975 55 L1140 178 L1110 195 Q1090 205 1070 190 L950 112 Q938 100 940 85Z" fill={D} />
    <Hole x={1025} y={197} rx={12} ry={27} r={-8} /><Hole x={1088} y={243} rx={12} ry={27} r={-8} />
    <Hole x={917} y={357} rx={21} ry={15} /><Hole x={1055} y={395} rx={21} ry={15} />
    <OBump x={1050} y={320} />
  </Olive>,
  <Olive key="4" vb="1184 5 383 550">
    <path d="M1320 135 V235 L1525 385 L1535 285 L1420 190Z" fill={L} />
    <path d="M1320 235 L1225 310 L1235 330 L1400 460 L1430 462 L1525 385Z" fill={D} />
    <path d="M1282 115 L1312 97 L1405 165 L1380 178Z M1412 212 L1432 188 L1530 258 L1505 285Z" fill={D} />
    <path d="M1300 140 V210 L1280 245 L1320 225 V140Z" fill="#6f6a18" />
    <path d="M1260 320 L1285 295 L1310 290 L1280 320 L1320 345 L1310 352Z" fill="#fff" />
    <Hole x={1372} y={350} rx={15} ry={9} />
    <path d="M1370 395 L1395 390 L1415 408 L1440 392 L1458 403 L1425 432Z" fill="#fff" />
  </Olive>,
  <Olive key="5" vb="142 665 651 550">
    <path d="M430 750 Q380 745 378 790 Q385 820 425 840 Q445 870 430 910 L395 950 L450 1040 L590 1020 L635 980 L635 835Z" fill={L} />
    <path d="M395 950 L268 1010 V1020 L435 1098 L510 1070 L590 1075 Q635 1050 610 1020 L545 995 L470 1030 L450 1040Z" fill={D} />
    <path d="M600 860 V990 L635 980 V835Z" fill={D} />
    <Hole x={440} y={798} rx={19} ry={19} r={-30} /><Hole x={530} y={838} rx={13} ry={13} />
    <Hole x={415} y={1024} rx={26} ry={10} /><Hole x={550} y={1043} rx={26} ry={8} />
  </Olive>,
  <Olive key="6" vb="815 665 651 550">
    <path d="M1012 770 L1175 740 L1320 792 L1158 823Z" fill="#8c6a85" />
    <path d="M1012 770 L1158 823 L1105 1135 L960 1082Z" fill="#ab86a6" />
    <path d="M1158 823 L1320 792 L1268 1105 L1105 1135Z" fill="#8d6c85" />
  </Olive>,
];

const Badge = ({ pct, color }: { pct: number; color: string }) => {
  if (pct === 50) {
    return (
      <div className="absolute left-0 top-0 w-[68px] h-[44px]">
        <svg viewBox="0 0 68 68" preserveAspectRatio="none" className="absolute inset-0 w-full h-full">
          <circle cx="33" cy="34" r="31" fill="none" stroke="#dcdcdc" strokeWidth="5" />
          <circle cx="33" cy="34" r="26" fill="#8a8a8a" />
          {[0, 1, 2, 3, 4, 5, 6].map((i) => {
            const a = (-90 + i * 25) * Math.PI / 180;
            return <circle key={i} cx={33 + 31 * Math.cos(a)} cy={34 + 31 * Math.sin(a)} r="3.5" fill="#888" />;
          })}
          <path d="M33 36 L45 44 L41 58 H25 L21 44Z" fill="#e8e8e8" />
        </svg>
        <span className="absolute left-[15px] top-[7px] text-[13px] font-bold text-[#e8e8e8] font-['Liberation_Sans',sans-serif] scale-x-125">50%</span>
      </div>
    );
  }
  return (
    <div className="absolute left-0 top-0 w-[68px] h-[44px]">
      <svg viewBox="0 0 68 68" preserveAspectRatio="none" className="absolute inset-0 w-full h-full">
        <circle cx="34" cy="34" r="31" fill="#ecebe0" stroke="#d8d8d8" strokeWidth="5" />
        <circle cx="34" cy="34" r="31" fill="none" stroke={color} strokeWidth="5" pathLength="100" strokeDasharray={`${pct} 100`} transform="rotate(-90 34 34)" />
        <path d="M34 8 L46 17 L41 28 H27 L22 17Z" fill={color} />
      </svg>
      <span className="absolute inset-x-0 top-[18px] text-center text-[14px] leading-[16px] font-bold tracking-[0.6px] scale-x-110 font-['Liberation_Sans',sans-serif]" style={{ color }}>{pct}%</span>
    </div>
  );
};

const cards: [number, string, string, string][] = [
  [90, "#10b25a", "20230516-01_TypeD.X_T", "Body <5>"],
  [90, "#10b25a", "20230516-01_TypeC.X_T", "Body <5>"],
  [90, "#10b25a", "20230516-01.excad", "Body <5>"],
  [70, "#ee6f0c", "20230516-10_TypeB.X_T", "Body <5>"],
  [70, "#ee6f0c", "20230516-06.excad", "Body <2>"],
  [50, "#888888", "070501-01.SLDPRT", "070501-01-ﾃﾞﾌｫﾙﾄ-001"],
];

const NavIcon = ({ d }: { d: string }) => (
  <div className="flex items-center justify-center w-[22px] h-[22px] bg-[#e4e3e6] rounded-[2px]">
    <svg viewBox="0 0 20 20" className="w-[20px] h-[20px]"><path d={d} fill="#dc7a7a" stroke="#888" strokeWidth="1.2" /></svg>
  </div>
);
const WhiteTile = ({ children }: Kids) => (
  <div className="flex items-center justify-center w-[21px] h-[21px] bg-[#f4f4f4] rounded-[2px]">{children}</div>
);

const Property2 = () => (
  <div className="flex flex-col h-[290px] bg-[#d0ced2] text-[12px] text-[#333] font-['Roboto',sans-serif]">
    <div className="flex items-center h-[28px] pl-[2px] pt-[3px] bg-[#c4c4c4] text-[12px] shrink-0">
      Property Window 2
      <span className="ml-auto border-x-[4px] border-t-[4px] border-x-transparent border-t-[#222]" />
      <S c="w-[10px] h-[10px] ml-[15px]"><path d="M5 1 H11 V9 H13 V10 H9 V15 H7 V10 H3 V9 H5Z" fill="#222" /></S>
      <X size={12} strokeWidth={1.4} className="ml-[12px] mr-[7px]" />
    </div>
    <div className="flex items-center h-[36px] shrink-0 pl-[3px] pb-[1px]">
      <div className="flex items-center w-[136px] h-[25px] bg-[#ccb4a6] border border-[#8a8078] rounded-[2px] pl-[3px] gap-[3px] text-[#343060] text-[12px] whitespace-nowrap">
        <S c="w-[18px] h-[18px]"><rect x="2" y="6" width="11" height="9" rx="3" fill="#d97fe0" /><circle cx="7" cy="4" r="3" fill="#b9d6ea" /><path d="M11 1 L15 4" stroke="#c96" strokeWidth="1" /></S>
        Search Similar Body
      </div>
      <svg viewBox="0 0 18 18" className="w-[18px] h-[18px] ml-[18px]"><path d="M3 3 L15 15 M15 3 L3 15" stroke="#c00d14" strokeWidth="5" /></svg>
      <Btn c="ml-[9px] w-[81px] h-[22px] text-[12px]">Search Further</Btn>
      <div className="flex items-center justify-center ml-[5px] w-[112px] h-[22px] bg-[#f2f2f2] rounded-[2px] text-[#9a9a9a] text-[12px] whitespace-nowrap">Release Refinement</div>
      <div className="flex items-center ml-[24px] w-[67px] h-[21px] bg-[#f0f0f0] pl-[3px] text-[#888]">1</div>
      <span className="ml-[7px]">/</span>
      <span className="ml-[16px]">1</span>
      <div className="flex gap-[3px] ml-[67px]">
        <NavIcon d="M3 3 H6 V17 H3Z M17 3 V17 L7 10Z" />
        <NavIcon d="M14 3 H17 V17 H14Z M13 3 V17 L3 10Z" />
        <NavIcon d="M3 3 H6 V17 H3Z M7 3 V17 L17 10Z" />
        <NavIcon d="M14 3 H17 V17 H14Z M3 3 V17 L13 10Z" />
      </div>
      <div className="flex gap-[5px] ml-[30px]">
        {["front", "top", "bottom", "left", "right", "back"].map((f) => (
          <WhiteTile key={f}><Cube f={f} c="w-[19px] h-[19px]" /></WhiteTile>
        ))}
        <WhiteTile><Iso c="w-[19px] h-[19px]" /></WhiteTile>
        <WhiteTile><Glasses c="w-[19px] h-[19px]" /></WhiteTile>
      </div>
    </div>
    <div className="grid grid-cols-6 gap-x-[7.5px] pl-[12px] pr-[7px] font-['Open_Sans','Noto_Sans_CJK_JP',sans-serif] text-[11px] tracking-[0.3px] text-[#4a4a4a]">
      {cards.map(([p, c, n, b], i) => (
        <div key={n} className="flex flex-col min-w-0">
          <div className="relative h-[183px] bg-white overflow-hidden">
            {thumbs[i]}
            <Badge pct={p} color={c} />
          </div>
          <div className="flex items-center h-[20px] pl-[3px] mt-[2px] border-b-2 border-[#c4c3c8] whitespace-nowrap">{n}</div>
          <div className="flex items-center h-[18px] pl-[3px] border-b-2 border-[#c4c3c8] whitespace-nowrap">{b}</div>
        </div>
      ))}
    </div>
  </div>
);

const Center = () => (
  <div className="flex flex-col w-[1556px] shrink-0 h-full">
    <div className="flex h-[528px] bg-[#f2f2f2] shrink-0">
      <div className="flex flex-col flex-1">
        <Canvas />
        <div className="flex items-center h-[20px] shrink-0">
          <span className="ml-[2px] w-[5px] h-[14px] bg-white border border-[#aaa]" />
          <div className="ml-[14px] w-[1497px] h-[5px] bg-[#888]" />
        </div>
      </div>
      <div className="flex flex-col items-center w-[19px] shrink-0 pb-[20px]">
        <span className="w-[13px] h-[5px] bg-white border border-[#aaa] mb-[14px] mt-[1px]" />
        <div className="w-[5px] flex-1 bg-[#888]" />
      </div>
    </div>
    <div className="flex h-[24px] bg-[#505050] shrink-0 items-stretch">
      <div className="grid grid-cols-3 gap-px w-[25px] bg-[#4a5a66] p-[1px]">
        {Array.from({ length: 9 }).map((_, i) => <span key={i} className="bg-[#6f8fa8]" />)}
      </div>
      <div className="flex items-center ml-[12px] w-[120px] bg-white border-b-[2px] border-[#ee7f10] pl-[4px] gap-[4px] text-[12.5px] text-[#303030] font-['Roboto','Noto_Sans_CJK_JP',sans-serif]">
        <S><rect x="1" y="2" width="14" height="12" fill="#c89828" stroke="#6a4a10" strokeWidth=".6" /><rect x="3" y="9" width="10" height="4" fill="#e8e8e8" /></S>
        四角形.excad
        <S c="w-[9px] h-[9px] ml-auto mr-[8px]"><path d="M5 4 H11 V12 H5Z M1 8 H5 M11 2 H13 V14 H11" fill="#222" stroke="#222" /></S>
      </div>
      <div className="ml-auto flex items-center gap-[20px] pr-[12px]">
        <span className="border-y-[3px] border-r-[3px] border-y-transparent border-r-[#777]" />
        <span className="border-y-[3px] border-l-[3px] border-y-transparent border-l-[#777]" />
        <span className="ml-[3px] border-x-[3px] border-b-[3px] border-x-transparent border-b-[#eee]" />
      </div>
    </div>
    <Property2 />
  </div>
);

const RightStrip = () => (
  <div className="flex flex-col items-center w-[32px] shrink-0 h-full bg-[#505050] text-[12px] text-[#e4e4e4] font-['Roboto',sans-serif]">
    <S c="w-[18px] h-[20px] mt-[8px]"><path d="M2 15 V9 L5 7 H10 V15Z" fill="#3ab8c8" stroke="#0d4e85" strokeWidth=".6" /><rect x="10" y="3" width="4" height="12" fill="#e8b018" /></S>
    <span className="[writing-mode:vertical-rl] mt-[3px] h-[42px]">Object</span>
    <span className="w-[28px] h-px bg-[#666]" />
    <S c="w-[18px] h-[18px] mt-[18px]"><rect x="1" y="1" width="6" height="14" fill="#18a8e8" /><rect x="8" y="1" width="7" height="6" fill="#d02020" /><rect x="8" y="8" width="7" height="7" fill="#38a838" /></S>
    <span className="[writing-mode:vertical-rl] mt-[7px] h-[40px]">Group</span>
    <S c="w-[18px] h-[18px] mt-[20px]"><circle cx="8" cy="8" r="7" fill="#e8e8f0" /><circle cx="6" cy="6" r="3" fill="#c85ab8" /><circle cx="11" cy="10" r="3" fill="#3a5ac8" /></S>
    <span className="[writing-mode:vertical-rl] mt-[6px] h-[116px]">3D Modeling History</span>
    <S c="w-[18px] h-[18px] mt-[22px]"><rect x="1" y="2" width="14" height="12" fill="#3ab89a" /><rect x="1" y="2" width="14" height="3" fill="#e8e8e8" /></S>
    <span className="[writing-mode:vertical-rl] mt-[6px]">SubView</span>
  </div>
);

const BottomBar = () => (
  <div className="flex h-[26px] bg-[#505050] text-[12px] font-['Roboto',sans-serif] shrink-0">
    <div className="flex items-center w-[355px] bg-[#eeeeee] border-b-2 border-[#d0d0d0]">
      <span className="ml-[3px] w-px h-[16px] border-l border-dotted border-[#444]" />
      <div className="flex items-center w-[103px] pl-[6px] text-[#909090]">Absolute<span className="ml-auto mr-[4px] w-[5px] h-[5px] border-r border-b border-[#aaa] rotate-45" /></div>
      <div className="flex items-center flex-1 h-[22px] bg-[#e4e4e4]"><span className="ml-auto mr-[8px] w-[5px] h-[5px] border-r border-b border-[#aaa] rotate-45" /></div>
    </div>
    <div className="flex items-center gap-[4px] w-[110px] bg-[#bdbdbd] pl-[6px]">
      <S c="w-[18px] h-[20px]"><path d="M1 9 L6 15 L15 1" fill="none" stroke="#3aa83a" strokeWidth="2" /></S>
      <S c="w-[16px] h-[20px]"><path d="M2 2 L14 15 M14 2 L2 15" stroke="#a8382a" strokeWidth="1.6" /></S>
      <S c="w-[14px] h-[18px]"><path d="M2 15 L7 3 H10 L6 15Z" fill="#333" /><path d="M11 1 L8 6 L12 7 L15 2Z" fill="#ecd44a" /></S>
      <S c="w-[16px] h-[18px]"><path d="M3 3 H11 V15 H3Z" fill="#5ab8e8" stroke="#555" strokeWidth=".5" /><path d="M11 3 L14 5 V15 H11Z" fill="#ddd" /></S>
      <span className="w-[11px] h-[18px] bg-[#d4d4d4] border border-[#aaa]" />
    </div>
    <div className="w-[35px]" />
    <div className="flex items-center w-[110px] bg-[#eeeeee] border-b-2 border-[#d0d0d0]">
      <span className="ml-[3px] w-px h-[16px] border-l border-dotted border-[#444]" />
      <span className="ml-[6px] w-[87px] h-px bg-[#999]" />
    </div>
    <div className="w-[50px]" />
    <div className="flex items-center w-[295px] bg-[#eeeeee]">
      <div className="flex items-center w-[25px] h-full bg-[#c0c0c0]">
        <S c="w-[16px] h-[18px] ml-[7px]"><circle cx="8" cy="8" r="7" fill="#f5c21a" stroke="#333" strokeWidth=".6" /><circle cx="5.5" cy="6" r="1" fill="#333" /><circle cx="10.5" cy="6" r="1" fill="#333" /><path d="M4 10 Q8 14 12 10" fill="none" stroke="#333" strokeWidth="1" /></S>
      </div>
    </div>
  </div>
);

export default function App() {
  return (
    <div className="flex flex-col w-[1900px] h-[1022px] overflow-hidden bg-[#505050] font-['Roboto',sans-serif]">
      <TitleBar />
      <TabsRow />
      <Ribbon />
      <div className="flex h-[842px] shrink-0 bg-[#d0ced2]">
        <LeftPanel />
        <div className="w-[6px] shrink-0 bg-[#cac8cc]" />
        <Center />
        <RightStrip />
      </div>
      <BottomBar />
      <div className="h-[2px] shrink-0" />
      <div className="flex h-[17px] shrink-0 bg-[#1a1a1a] text-[12px] text-[#e0e0e0] leading-[17px]">
        <span className="pl-[2px] w-[1441px]">&lt;Search Similar Body&gt;</span>
        <span className="w-[111px] border-x border-[#666] pl-[2px] whitespace-nowrap">Magnification: 3.281</span>
        <span className="w-[138px] border-r border-[#666]" />
      </div>
    </div>
  );
}
